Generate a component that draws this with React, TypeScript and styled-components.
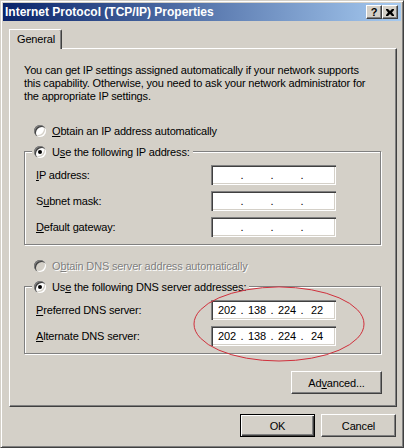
import { Fragment } from 'react';
import styled, { createGlobalStyle } from 'styled-components';

const GlobalStyle = createGlobalStyle`
    html, body {
        margin: 0;
        padding: 0;
        background: #d4d0c8;
    }
    body {
        font-family: "Liberation Sans", Arial, sans-serif;
        font-size: 11px;
        letter-spacing: -0.16px;
        color: #000;
    }
`;

const Window = styled.div`
    position: relative;
    width: 404px;
    height: 448px;
    box-sizing: border-box;
    padding: 2px;
    background: #d4d0c8;
    border: 1px solid;
    border-color: #d4d0c8 #404040 #404040 #d4d0c8;
    box-shadow: inset 1px 1px #fff, inset -1px -1px #808080;
    display: flex;
    flex-direction: column;
`;

const TitleBar = styled.div`
    height: 18px;
    display: flex;
    align-items: center;
    padding: 0 3px 0 2px;
    background: linear-gradient(to right, #0a246a, #a6caf0);
`;

const Title = styled.span`
    flex: 1;
    color: #fff;
    font-weight: bold;
    font-size: 12px;
    letter-spacing: 0;
    white-space: nowrap;
`;

const CaptionButton = styled.div`
    width: 16px;
    height: 14px;
    box-sizing: border-box;
    background: #d4d0c8;
    border: 1px solid;
    border-color: #fff #404040 #404040 #fff;
    box-shadow: inset -1px -1px #808080;
    display: flex;
    align-items: center;
    justify-content: center;
    font-weight: bold;
    font-size: 11px;
    line-height: 12px;
`;

const Body = styled.div`
    padding: 8px 4px 0 6px;
    display: flex;
    flex-direction: column;
`;

const TabStrip = styled.div`
    display: flex;
    margin-bottom: -1px;
    position: relative;
    z-index: 1;
`;

const Tab = styled.div`
    width: 53px;
    height: 20px;
    box-sizing: border-box;
    padding-left: 7px;
    line-height: 18px;
    background: #d4d0c8;
    border-top: 1px solid #fff;
    border-left: 1px solid #fff;
    border-right: 1px solid #404040;
    border-top-right-radius: 2px;
    box-shadow: inset -1px 0 #808080;
`;

const Panel = styled.div`
    box-sizing: border-box;
    padding: 15px 15px 12px 14px;
    border: 1px solid;
    border-color: #fff #404040 #404040 #fff;
    box-shadow: inset -1px -1px #808080;
    display: flex;
    flex-direction: column;
`;

const Intro = styled.p`
    margin: 0;
    line-height: 13px;
    white-space: nowrap;
`;

const RadioRow = styled.div<{ $top: number; $disabled?: boolean }>`
    display: flex;
    align-items: center;
    gap: 6px;
    height: 13px;
    margin-top: ${(p) => p.$top}px;
    padding-left: 10px;
    color: ${(p) => (p.$disabled ? '#808080' : '#000')};
    text-shadow: ${(p) => (p.$disabled ? '1px 1px 0 #fff' : 'none')};
`;

const Radio = styled.span<{ $checked?: boolean; $disabled?: boolean }>`
    position: relative;
    width: 12px;
    height: 12px;
    flex: none;
    border-radius: 50%;
    background: ${(p) => (p.$disabled ? '#d4d0c8' : '#fff')};
    box-shadow: inset 1px 1px #808080, inset 2px 2px #404040,
        inset -1px -1px #fff, inset -2px -2px #d4d0c8;

    &::after {
        content: '';
        display: ${(p) => (p.$checked ? 'block' : 'none')};
        position: absolute;
        left: 4px;
        top: 4px;
        width: 4px;
        height: 4px;
        border-radius: 50%;
        background: #000;
    }
`;

const Group = styled.fieldset<{ $top: number }>`
    margin: ${(p) => p.$top}px 0 0;
    min-width: 0;
    padding: 7px 44px 7px 10px;
    border: 1px solid #808080;
    box-shadow: inset 1px 1px #fff, 1px 1px #fff;
    display: flex;
    flex-direction: column;
    gap: 6px;
`;

const Legend = styled.legend`
    margin-left: -3px;
    padding: 0 3px 0 2px;
    background: #d4d0c8;
    display: flex;
    align-items: center;
    gap: 6px;
    height: 13px;
`;

const FieldRow = styled.div`
    display: flex;
    align-items: center;
    justify-content: space-between;
    height: 20px;
    padding-left: 1px;
`;

const IpField = styled.div`
    width: 125px;
    height: 20px;
    box-sizing: border-box;
    padding-left: 4px;
    background: #fff;
    box-shadow: inset 1px 1px #808080, inset 2px 2px #404040,
        inset -1px -1px #fff, inset -2px -2px #d4d0c8;
    display: flex;
    align-items: center;
`;

const Octet = styled.span`
    width: 24px;
    text-align: center;
`;

const Dot = styled.span`
    width: 6px;
    text-align: center;
`;

const Button = styled.button<{ $width: number; $default?: boolean }>`
    width: ${(p) => p.$width}px;
    height: 23px;
    box-sizing: border-box;
    padding: 0;
    margin: 0;
    font: inherit;
    letter-spacing: inherit;
    color: #000;
    background: #d4d0c8;
    border: 1px solid;
    border-color: ${(p) => (p.$default ? '#000' : '#fff #404040 #404040 #fff')};
    box-shadow: ${(p) =>
        p.$default
            ? 'inset 1px 1px #fff, inset -1px -1px #404040, inset -2px -2px #808080'
            : 'inset -1px -1px #808080'};
`;

const AdvancedButton = styled(Button)`
    align-self: flex-end;
    margin: 17px -1px 0 0;
`;

const ButtonBar = styled.div`
    display: flex;
    justify-content: flex-end;
    gap: 6px;
    margin-top: 7px;
    padding-right: 1px;
`;

const Annotation = styled.svg`
    position: absolute;
    left: 0;
    top: 0;
    pointer-events: none;
`;

const IpAddress = ({ value }: { value?: string[] }) => {
    const parts = value ?? ['', '', '', ''];
    return (
        <IpField>
            {parts.map((part, i) => (
                <Fragment key={`octet_${i}`}>
                    <Octet>{part}</Octet>
                    {i < 3 && <Dot>.</Dot>}
                </Fragment>
            ))}
        </IpField>
    );
};

const App = () => {
    return (
        <>
            <GlobalStyle />
            <Window>
                <TitleBar>
                    <Title>Internet Protocol (TCP/IP) Properties</Title>
                    <CaptionButton>?</CaptionButton>
                    <CaptionButton>
                        <svg width="8" height="7" viewBox="0 0 8 7">
                            <path
                                d="M0 0h2l2 2 2-2h2v1L6 3.5 8 6v1H6L4 5 2 7H0V6l2-2.5L0 1z"
                                fill="#000"
                            />
                        </svg>
                    </CaptionButton>
                </TitleBar>
                <Body>
                    <TabStrip>
                        <Tab>General</Tab>
                    </TabStrip>
                    <Panel>
                        <Intro>
                            You can get IP settings assigned automatically if your network supports
                            <br />
                            this capability. Otherwise, you need to ask your network administrator for
                            <br />
                            the appropriate IP settings.
                        </Intro>
                        <RadioRow $top={21}>
                            <Radio />
                            <span>
                                <u>O</u>btain an IP address automatically
                            </span>
                        </RadioRow>
                        <Group $top={8}>
                            <Legend>
                                <Radio $checked />
                                <span>
                                    U<u>s</u>e the following IP address:
                                </span>
                            </Legend>
                            <FieldRow>
                                <span>
                                    <u>I</u>P address:
                                </span>
                                <IpAddress />
                            </FieldRow>
                            <FieldRow>
                                <span>
                                    S<u>u</u>bnet mask:
                                </span>
                                <IpAddress />
                            </FieldRow>
                            <FieldRow>
                                <span>
                                    <u>D</u>efault gateway:
                                </span>
                                <IpAddress />
                            </FieldRow>
                        </Group>
                        <RadioRow $top={14} $disabled>
                            <Radio $disabled />
                            <span>
                                O<u>b</u>tain DNS server address automatically
                            </span>
                        </RadioRow>
                        <Group $top={8}>
                            <Legend>
                                <Radio $checked />
                                <span>
                                    Us<u>e</u> the following DNS server addresses:
                                </span>
                            </Legend>
                            <FieldRow>
                                <span>
                                    <u>P</u>referred DNS server:
                                </span>
                                <IpAddress value={['202', '138', '224', '22']} />
                            </FieldRow>
                            <FieldRow>
                                <span>
                                    <u>A</u>lternate DNS server:
                                </span>
                                <IpAddress value={['202', '138', '224', '24']} />
                            </FieldRow>
                        </Group>
                        <AdvancedButton $width={91}>
                            Ad<u>v</u>anced...
                        </AdvancedButton>
                    </Panel>
                    <ButtonBar>
                        <Button $width={75} $default>
                            OK
                        </Button>
                        <Button $width={75}>Cancel</Button>
                    </ButtonBar>
                </Body>
                <Annotation width="404" height="448">
                    <ellipse
                        cx="278"
                        cy="323"
                        rx="85"
                        ry="37"
                        fill="none"
                        stroke="#d0303c"
                        strokeWidth="1"
                    />
                </Annotation>
            </Window>
        </>
    );
};

export default App;
